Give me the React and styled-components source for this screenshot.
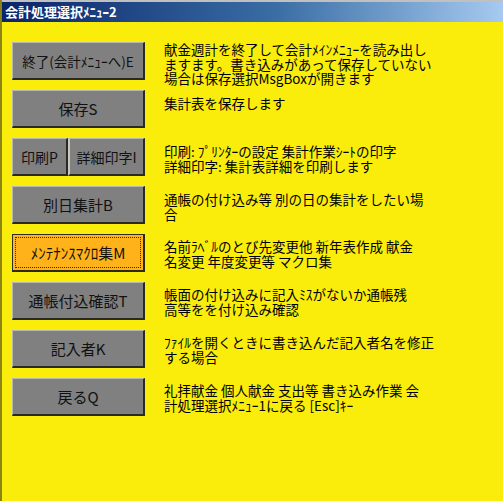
import React from "react";
import styled, { createGlobalStyle } from "styled-components";

const GlobalStyle = createGlobalStyle`
  html, body {
    margin: 0;
    padding: 0;
    background: #faed0c;
  }
  body {
    font-family: "Noto Sans CJK JP", "Liberation Sans", sans-serif;
  }
`;

const menu = [
  {
    keys: [{ label: "終了(会計ﾒﾆｭｰへ)E", size: 13.5 }],
    lines: [
      "献金週計を終了して会計ﾒｲﾝﾒﾆｭｰを読み出し",
      "ますます。書き込みがあって保存していない",
      "場合は保存選択MsgBoxが開きます",
    ],
    top: 0,
  },
  {
    keys: [{ label: "保存S", size: 15 }],
    lines: ["集計表を保存します"],
    top: 6,
  },
  {
    keys: [
      { label: "印刷P", size: 14, width: 56 },
      { label: "詳細印字I", size: 14, width: 77 },
    ],
    lines: ["印刷: ﾌﾟﾘﾝﾀｰの設定 集計作業ｼｰﾄの印字", "詳細印字: 集計表詳細を印刷します"],
    top: 6,
  },
  {
    keys: [{ label: "別日集計B", size: 15 }],
    lines: ["通帳の付け込み等 別の日の集計をしたい場", "合"],
    top: 6,
  },
  {
    keys: [{ label: "ﾒﾝﾃﾅﾝｽﾏｸﾛ集M", size: 15 }],
    lines: ["名前ﾗﾍﾞﾙのとび先変更他 新年表作成 献金", "名変更 年度変更等 マクロ集"],
    top: 5,
    focused: true,
  },
  {
    keys: [{ label: "通帳付込確認T", size: 15 }],
    lines: ["帳面の付け込みに記入ﾐｽがないか通帳残", "高等をを付け込み確認"],
    top: 5,
  },
  {
    keys: [{ label: "記入者K", size: 15 }],
    lines: ["ﾌｧｲﾙを開くときに書き込んだ記入者名を修正", "する場合"],
    top: 5,
  },
  {
    keys: [{ label: "戻るQ", size: 15 }],
    lines: ["礼拝献金 個人献金 支出等 書き込み作業 会", "計処理選択ﾒﾆｭｰ1に戻る [Esc]ｷｰ"],
    top: 5,
  },
];

export default function App() {
  return (
    <>
      <GlobalStyle />
      <Window>
        <TitleBar>会計処理選択ﾒﾆｭｰ2</TitleBar>
        <Body>
          {menu.map((row, i) => (
            <Row key={i}>
              <ButtonGroup>
                {row.keys.map((k) => (
                  <MenuButton
                    key={k.label}
                    $size={k.size}
                    $width={k.width}
                    $focused={row.focused}
                  >
                    {row.focused ? <FocusRing>{k.label}</FocusRing> : k.label}
                  </MenuButton>
                ))}
              </ButtonGroup>
              <Description $top={row.top}>
                {row.lines.map((l) => (
                  <Line key={l}>{l}</Line>
                ))}
              </Description>
            </Row>
          ))}
        </Body>
      </Window>
    </>
  );
}

const Window = styled.div`
  width: 503px;
  height: 501px;
  display: flex;
  flex-direction: column;
  background: #faed0c;
  border-left: 2px solid #8c8410;
  box-sizing: border-box;
  overflow: hidden;
`;

const TitleBar = styled.div`
  height: 22px;
  flex: none;
  box-sizing: border-box;
  border-top: 2px solid #c0c0c0;
  background: linear-gradient(to right, #0a246a 0%, #3a6ea5 55%, #a6caf0 100%);
  color: #ffffff;
  font-weight: bold;
  font-size: 13px;
  line-height: 19px;
  padding-left: 3px;
`;

const Body = styled.div`
  display: flex;
  flex-direction: column;
  gap: 10px;
  padding: 20px 0 0 10px;
`;

const Row = styled.div`
  display: grid;
  grid-template-columns: 133px 1fr;
  grid-template-rows: 38px;
  height: 38px;
  column-gap: 19px;
  align-items: start;
`;

const ButtonGroup = styled.div`
  display: flex;
  height: 38px;
`;

const MenuButton = styled.div`
  flex: ${(p) => (p.$width ? `0 0 ${p.$width}px` : "1 1 auto")};
  display: flex;
  align-items: center;
  justify-content: center;
  box-sizing: border-box;
  background: ${(p) => (p.$focused ? "#ffb21a" : "#808080")};
  color: #111111;
  font-size: ${(p) => p.$size}px;
  white-space: nowrap;
  border-top: 1px solid ${(p) => (p.$focused ? "#303030" : "#b8b8b0")};
  border-left: 1px solid ${(p) => (p.$focused ? "#303030" : "#b8b8b0")};
  border-bottom: 2px solid #2a2a20;
  border-right: 2px solid #2a2a20;
  padding: ${(p) => (p.$focused ? "2px" : "0")};

  & + & {
    border-left: 2px solid #c8c8c0;
  }
`;

const FocusRing = styled.span`
  flex: 1;
  align-self: stretch;
  display: flex;
  align-items: center;
  justify-content: center;
  border: 1px dotted #3a2a00;
`;

const Description = styled.div`
  margin-top: ${(p) => p.$top}px;
  font-size: 13.5px;
  line-height: 14.5px;
  color: #000000;
`;

const Line = styled.div`
  white-space: nowrap;
`;
